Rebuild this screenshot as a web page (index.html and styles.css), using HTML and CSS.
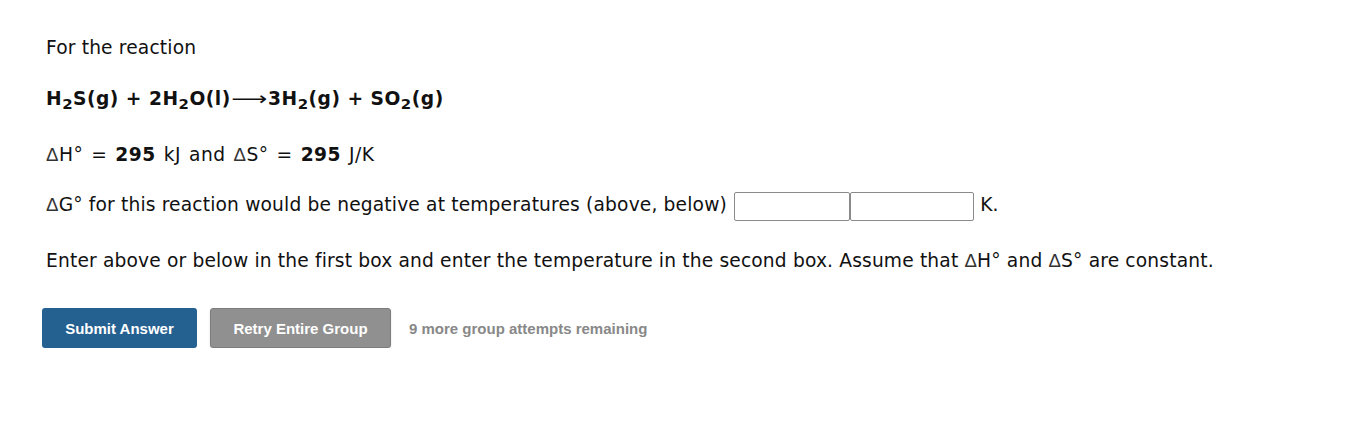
FILE: index.html
```html
<!DOCTYPE html>
<html>
<head>
<meta charset="utf-8">
<link rel="stylesheet" href="styles.css">
</head>
<body>
<div class="question">
  <p class="p1">For the reaction</p>
  <p class="eq"><b>H<sub>2</sub>S(g) + 2H<sub>2</sub>O(l)<span class="arrow">&#x27F6;</span>3H<sub>2</sub>(g) + SO<sub>2</sub>(g)</b></p>
  <p class="p3"><span class="d">&Delta;</span>H&deg; = <b>295</b> kJ and <span class="d">&Delta;</span>S&deg; = <b>295</b> J/K</p>
  <p class="p4"><span class="d">&Delta;</span>G&deg; for this reaction would be negative at temperatures (above, below) <span class="inputs"><input class="in1" type="text"><input class="in2" type="text"></span> K.</p>
  <p class="p5">Enter above or below in the first box and enter the temperature in the second box. Assume that <span class="d">&Delta;</span>H&deg; and <span class="d">&Delta;</span>S&deg; are constant.</p>
</div>
<div class="actions">
  <button class="btn submit">Submit Answer</button>
  <button class="btn retry">Retry Entire Group</button>
  <span class="remaining">9 more group attempts remaining</span>
</div>
</body>
</html>
```
FILE: styles.css
```css
html, body { margin: 0; padding: 0; background: #fff; }
body { font-family: "DejaVu Sans", Verdana, sans-serif; font-size: 18.67px; letter-spacing: 0.15px; color: #111; }
.question { padding: 37px 0 0 46px; }
.question p { margin: 0; line-height: 22px; }
.eq { margin-top: 29px !important; letter-spacing: 0.5px; }
.eq sub { font-size: 0.8em; vertical-align: -4px; line-height: 0; }
.arrow { font-weight: normal; display: inline-block; transform: scaleX(1.35); margin: 0 5px; }
.p3 { margin-top: 34px !important; letter-spacing: 0.5px; word-spacing: 1.5px; }
.p4 { margin-top: 27px !important; }
.p5 { margin-top: 32px !important; }
.d { font-family: "Liberation Sans", Arial, sans-serif; color: #333; }
.inputs { display: inline-flex; vertical-align: middle; margin-top: -4px; margin-left: 1px; position: relative; top: 3px; }
input { box-sizing: border-box; height: 29px; border: 1px solid #8a8a8a; border-radius: 2px; margin: 0; padding: 0 4px; font-size: 16px; }
.in1 { width: 116px; }
.in2 { width: 124px; }
.actions { display: flex; align-items: center; gap: 13px; padding: 36px 0 0 42px; }
.btn { font-family: "Liberation Sans", Arial, sans-serif; font-weight: bold; font-size: 15px; letter-spacing: 0; color: #fff; height: 40px; border-radius: 3px; border: none; padding: 0; }
.submit { background: #246090; width: 155px; }
.retry { background: #909090; width: 181px; border: 1px solid #7d7d7d; box-shadow: 0 1px 2px rgba(0,0,0,0.15); }
.remaining { font-family: "Liberation Sans", Arial, sans-serif; font-weight: bold; font-size: 15px; letter-spacing: 0; color: #888; margin-left: 5px; }
```
